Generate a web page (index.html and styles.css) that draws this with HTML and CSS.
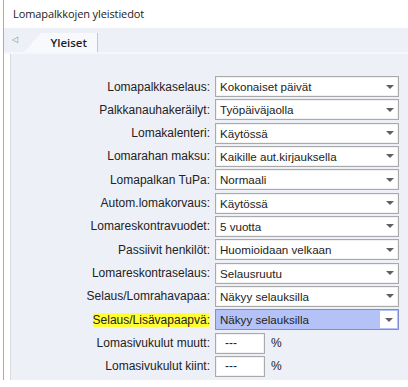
FILE: index.html
```html
<!DOCTYPE html>
<html>
<head>
<meta charset="utf-8">
<link rel="stylesheet" href="styles.css">
</head>
<body>
<div class="window">
  <div class="title">Lomapalkkojen yleistiedot</div>
  <div class="tabbar">
    <span class="tab-arrow">&#9665;</span>
    <div class="tab"><span class="tab-label">Yleiset</span></div>
  </div>
  <div class="panel">
    <div class="form">
      <label class="lbl">Lomapalkkaselaus:</label>
      <div class="select"><span class="val">Kokonaiset päivät</span><span class="arrow"></span></div>

      <label class="lbl">Palkkanauhakeräilyt:</label>
      <div class="select"><span class="val">Työpäiväjaolla</span><span class="arrow"></span></div>

      <label class="lbl">Lomakalenteri:</label>
      <div class="select"><span class="val">Käytössä</span><span class="arrow"></span></div>

      <label class="lbl">Lomarahan maksu:</label>
      <div class="select"><span class="val">Kaikille aut.kirjauksella</span><span class="arrow"></span></div>

      <label class="lbl">Lomapalkan TuPa:</label>
      <div class="select"><span class="val">Normaali</span><span class="arrow"></span></div>

      <label class="lbl">Autom.lomakorvaus:</label>
      <div class="select"><span class="val">Käytössä</span><span class="arrow"></span></div>

      <label class="lbl">Lomareskontravuodet:</label>
      <div class="select"><span class="val">5 vuotta</span><span class="arrow"></span></div>

      <label class="lbl">Passiivit henkilöt:</label>
      <div class="select"><span class="val">Huomioidaan velkaan</span><span class="arrow"></span></div>

      <label class="lbl">Lomareskontraselaus:</label>
      <div class="select"><span class="val">Selausruutu</span><span class="arrow"></span></div>

      <label class="lbl">Selaus/Lomrahavapaa:</label>
      <div class="select"><span class="val">Näkyy selauksilla</span><span class="arrow"></span></div>

      <label class="lbl"><span class="hl">Selaus/Lisävapaapvä:</span></label>
      <div class="select active"><span class="val">Näkyy selauksilla</span><span class="arrow"></span></div>

      <label class="lbl">Lomasivukulut muutt:</label>
      <div class="pct"><span class="input">---</span><span class="unit">%</span></div>

      <label class="lbl">Lomasivukulut kiint:</label>
      <div class="pct"><span class="input">---</span><span class="unit">%</span></div>
    </div>
  </div>
</div>
</body>
</html>
```
FILE: styles.css
```css
html, body {
  margin: 0;
  padding: 0;
  background: #ffffff;
  width: 408px;
  height: 387px;
  overflow: hidden;
}

.window {
  margin-left: 3px;
  border-left: 1px solid #ababab;
  height: 380px;
  display: flex;
  flex-direction: column;
}

.title {
  height: 28px;
  box-sizing: border-box;
  padding-left: 9px;
  padding-top: 6px;
  font-family: "Open Sans", "Liberation Sans", sans-serif;
  font-size: 11px;
  color: #1a1a1a;
  letter-spacing: -0.1px;
}

.tabbar {
  height: 24px;
  background: #eef0f8;
  border-bottom: 2px solid #f6f7fb;
  display: flex;
  align-items: flex-end;
}

.tab-arrow {
  font-family: "DejaVu Sans", sans-serif;
  font-size: 8px;
  color: #8a8a8a;
  width: 20px;
  padding-left: 8px;
  align-self: center;
  line-height: 1;
}

.tab {
  height: 19px;
  width: 74px;
  margin-left: -8px;
  background: #f8f9fc;
  clip-path: polygon(17px 0, 100% 0, 100% 100%, 0 100%);
  border-right: 1px solid #c6c6c6;
  box-sizing: border-box;
  display: flex;
  align-items: center;
  justify-content: flex-end;
  padding-right: 10px;
}

.tab-label {
  font-family: "Open Sans", "Liberation Sans", sans-serif;
  font-size: 11.5px;
  font-weight: 600;
  color: #1f1f1f;
}

.panel {
  flex: 1;
  margin-left: 6px;
  border-left: 1px solid #d9d9de;
  background: #eef0f8;
  padding-top: 22px;
}

.form {
  display: grid;
  grid-template-columns: 199px 184px;
  column-gap: 5px;
  row-gap: 2.33px;
  grid-auto-rows: 21px;
  font-family: "Liberation Sans", Arial, sans-serif;
  font-size: 12px;
  color: #222;
}

.lbl {
  text-align: right;
  align-self: center;
  white-space: nowrap;
}

.hl {
  background: #ffff33;
}

.select {
  box-sizing: border-box;
  border: 1px solid #a9a9a9;
  box-shadow: inset 0 0 0 1px #f2f2f2;
  background: #ffffff;
  display: flex;
  align-items: center;
  padding-left: 4px;
  font-size: 11.6px;
}

.val {
  flex: 1;
  white-space: nowrap;
}

.arrow {
  width: 17px;
  height: 100%;
  display: flex;
  align-items: center;
  justify-content: center;
}

.arrow::before {
  content: "";
  width: 0;
  height: 0;
  border-left: 4px solid transparent;
  border-right: 4px solid transparent;
  border-top: 4px solid #606060;
}

.select.active {
  background: #b4c2f7;
  border-color: #7e8ed3;
  box-shadow: none;
}

.select.active .arrow {
  background: #ffffff;
  margin-right: 1px;
  height: 17px;
}

.pct {
  display: flex;
  align-items: center;
  gap: 6px;
}

.input {
  box-sizing: border-box;
  width: 50px;
  height: 21px;
  border: 1px solid #a9a9a9;
  box-shadow: inset 0 0 0 1px #f2f2f2;
  background: #ffffff;
  display: flex;
  align-items: center;
  padding-left: 9px;
}
```
